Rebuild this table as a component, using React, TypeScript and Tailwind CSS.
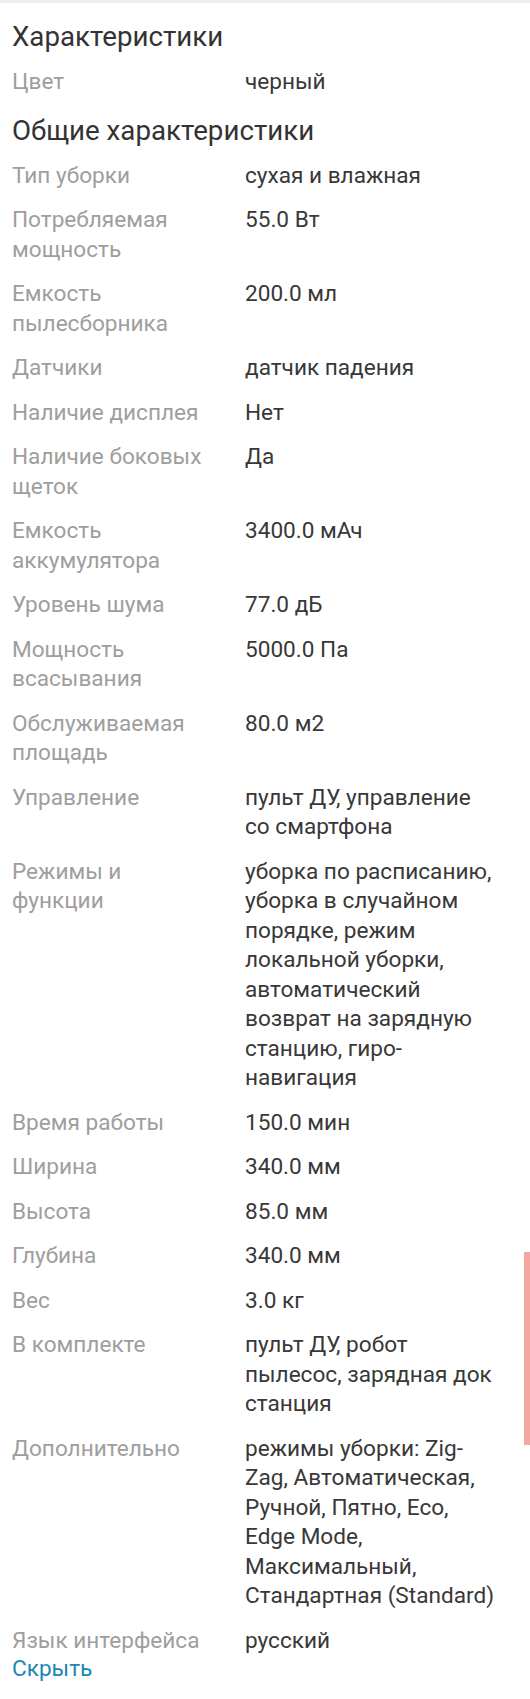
import React from "react";

type Spec = { label: string; value: string };

const COLOR: Spec[] = [{ label: "Цвет", value: "черный" }];

const GENERAL: Spec[] = [
  { label: "Тип уборки", value: "сухая и влажная" },
  { label: "Потребляемая мощность", value: "55.0 Вт" },
  { label: "Емкость пылесборника", value: "200.0 мл" },
  { label: "Датчики", value: "датчик падения" },
  { label: "Наличие дисплея", value: "Нет" },
  { label: "Наличие боковых щеток", value: "Да" },
  { label: "Емкость аккумулятора", value: "3400.0 мАч" },
  { label: "Уровень шума", value: "77.0 дБ" },
  { label: "Мощность всасывания", value: "5000.0 Па" },
  { label: "Обслуживаемая площадь", value: "80.0 м2" },
  { label: "Управление", value: "пульт ДУ, управление со смартфона" },
  {
    label: "Режимы и функции",
    value:
      "уборка по расписанию, уборка в случайном порядке, режим локальной уборки, автоматический возврат на зарядную станцию, гиро-навигация",
  },
  { label: "Время работы", value: "150.0 мин" },
  { label: "Ширина", value: "340.0 мм" },
  { label: "Высота", value: "85.0 мм" },
  { label: "Глубина", value: "340.0 мм" },
  { label: "Вес", value: "3.0 кг" },
  { label: "В комплекте", value: "пульт ДУ, робот пылесос, зарядная док станция" },
  {
    label: "Дополнительно",
    value:
      "режимы уборки: Zig-Zag, Автоматическая, Ручной, Пятно, Eco, Edge Mode, Максимальный, Стандартная (Standard)",
  },
  { label: "Язык интерфейса", value: "русский" },
];

function Rows({ items }: { items: Spec[] }) {
  return (
    <div className="flex flex-col gap-[15px]">
      {items.map((s) => (
        <div key={s.label} className="flex text-[22.6px] leading-[29.5px]">
          <div className="w-[233px] shrink-0 pr-[30px] text-[#9e9e9e]">{s.label}</div>
          <div className="w-[253px] text-[#383838]">{s.value}</div>
        </div>
      ))}
    </div>
  );
}

export default function App() {
  return (
    <div className="relative w-[530px] min-h-[1699px] bg-white font-['Roboto',sans-serif]">
      <div className="h-[3px] bg-[#eeeeee]" />
      <div className="pl-[12px]">
        <h2 className="mt-[16px] text-[27.7px] leading-[36px] text-[#333333]">Характеристики</h2>
        <div className="mt-[12px]">
          <Rows items={COLOR} />
        </div>
        <h2 className="mt-[16px] text-[27.7px] leading-[36px] text-[#333333]">Общие характеристики</h2>
        <div className="mt-[12px]">
          <Rows items={GENERAL} />
        </div>
        <button className="block text-[22.6px] leading-[27.5px] text-[#1b87b4]">Скрыть</button>
      </div>

      {/* scroll indicator */}
      <div className="absolute right-0 top-[1252px] h-[193px] w-[6px] bg-[#f4a6a0]" />
    </div>
  );
}
